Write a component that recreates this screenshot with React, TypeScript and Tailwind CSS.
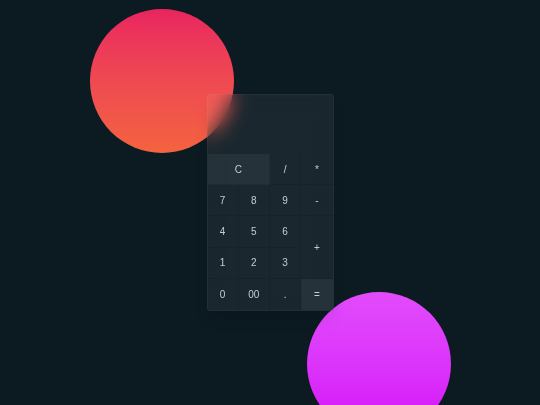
import React from "react";

export default function App() {
  const btn =
    "flex items-center justify-center border-r border-b border-black/10 text-[10px] text-[#c7ccd0]";
  return (
    <div
      className="relative w-[540px] h-[405px] overflow-hidden bg-[#0c1a22] flex items-center justify-center"
      style={{ fontFamily: '"Liberation Sans", Arial, sans-serif' }}
    >
      <div className="absolute left-[90px] top-[9px] w-[144px] h-[144px] rounded-full bg-gradient-to-b from-[#e9245f] to-[#f4633e]" />
      <div className="absolute left-[307px] top-[292px] w-[144px] h-[144px] rounded-full bg-gradient-to-b from-[#e24bfc] to-[#d504f9]" />

      <div className="relative z-10 w-[127px] h-[217px] flex flex-col rounded-[3px] overflow-hidden bg-white/[0.06] backdrop-blur-[10px] border border-white/[0.04] shadow-lg">
        <div className="h-[59px] shrink-0" />
        <div className="flex-1 grid grid-cols-4 grid-rows-5">
          <div className={`${btn} col-span-2 bg-white/[0.05]`}>C</div>
          <div className={btn}>/</div>
          <div className={`${btn} border-r-0`}>*</div>
          <div className={btn}>7</div>
          <div className={btn}>8</div>
          <div className={btn}>9</div>
          <div className={`${btn} border-r-0`}>-</div>
          <div className={btn}>4</div>
          <div className={btn}>5</div>
          <div className={btn}>6</div>
          <div className={`${btn} row-span-2 border-r-0`}>+</div>
          <div className={btn}>1</div>
          <div className={btn}>2</div>
          <div className={btn}>3</div>
          <div className={`${btn} border-b-0`}>0</div>
          <div className={`${btn} border-b-0`}>00</div>
          <div className={`${btn} border-b-0`}>.</div>
          <div className={`${btn} border-b-0 border-r-0 bg-white/[0.05]`}>=</div>
        </div>
      </div>
    </div>
  );
}
